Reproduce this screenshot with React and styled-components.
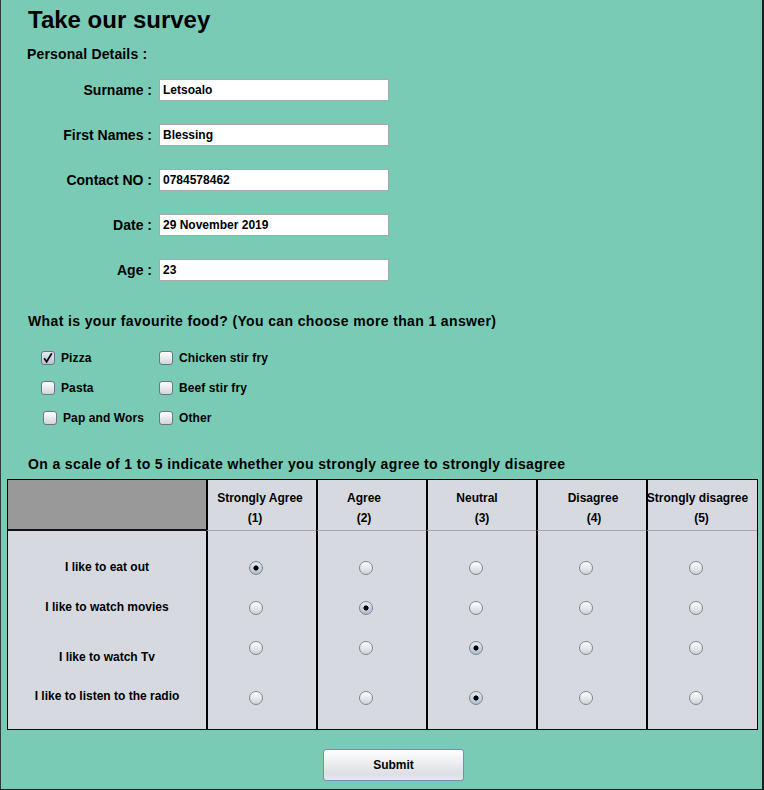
import React from 'react';
import styled, { createGlobalStyle } from 'styled-components';

const GlobalStyle = createGlobalStyle`
  html, body {
    margin: 0;
    padding: 0;
    background: #7acbb5;
  }
  * {
    box-sizing: border-box;
  }
`;

const fields = [
  { label: 'Surname :', value: 'Letsoalo' },
  { label: 'First Names :', value: 'Blessing' },
  { label: 'Contact NO :', value: '0784578462' },
  { label: 'Date :', value: '29 November 2019' },
  { label: 'Age :', value: '23' },
];

const foods = [
  { label: 'Pizza', checked: true },
  { label: 'Chicken stir fry' },
  { label: 'Pasta' },
  { label: 'Beef stir fry' },
  { label: 'Pap and Wors', nudge: 2 },
  { label: 'Other' },
];

const scale = [
  { title: 'Strongly Agree', num: '(1)', shift: [-2, -7] },
  { title: 'Agree', num: '(2)', shift: [-8, -8] },
  { title: 'Neutral', num: '(3)', shift: [-5, 0] },
  { title: 'Disagree', num: '(4)', shift: [1, 2] },
  { title: 'Strongly disagree', num: '(5)', shift: [-5, -1] },
];

const statements = [
  { label: 'I like to eat out', pick: 0, height: 56, labelPad: 29, radioPad: 30 },
  { label: 'I like to watch movies', pick: 1, height: 40, labelPad: 13, radioPad: 14 },
  { label: 'I like to watch Tv', pick: 2, height: 50, labelPad: 23, radioPad: 14 },
  { label: 'I like to listen to the radio', pick: 2, height: 52, labelPad: 12, radioPad: 14 },
];

export default function App() {
  return (
    <>
      <GlobalStyle />
      <Window>
        <Title>Take our survey</Title>
        <SectionLabel>Personal Details :</SectionLabel>

        <Form>
          {fields.map((f) => (
            <FieldRow key={f.label}>
              <FieldLabel>{f.label}</FieldLabel>
              <TextBox readOnly defaultValue={f.value} />
            </FieldRow>
          ))}
        </Form>

        <Question $top={32}>
          What is your favourite food? (You can choose more than 1 answer)
        </Question>

        <FoodGrid>
          {foods.map((f) => (
            <FoodItem key={f.label} $nudge={f.nudge || 0}>
              <CheckBox $checked={f.checked}>
                {f.checked && (
                  <svg width="12" height="12" viewBox="0 0 12 12">
                    <path
                      d="M2.2 6.2 L4.6 9.8 L9.8 1.2"
                      fill="none"
                      stroke="#111"
                      strokeWidth="1.8"
                    />
                  </svg>
                )}
              </CheckBox>
              <FoodLabel>{f.label}</FoodLabel>
            </FoodItem>
          ))}
        </FoodGrid>

        <Question $top={23}>
          On a scale of 1 to 5 indicate whether you strongly agree to strongly disagree
        </Question>

        <Table>
          <CornerCell />
          {scale.map((s) => (
            <HeadCell key={s.num}>
              <HeadLine $shift={s.shift[0]}>{s.title}</HeadLine>
              <HeadLine $shift={s.shift[1]}>{s.num}</HeadLine>
            </HeadCell>
          ))}

          {statements.map((row) => (
            <React.Fragment key={row.label}>
              <StatementCell $h={row.height} $pad={row.labelPad}>
                {row.label}
              </StatementCell>
              {scale.map((s, i) => (
                <RadioCell key={s.num} $h={row.height} $pad={row.radioPad}>
                  <Radio $on={row.pick === i} />
                </RadioCell>
              ))}
            </React.Fragment>
          ))}
        </Table>

        <ButtonRow>
          <SubmitButton>Submit</SubmitButton>
        </ButtonRow>
      </Window>
    </>
  );
}

const Window = styled.div`
  min-height: 790px;
  width: 764px;
  padding: 6px 0 0 6px;
  border-left: 1px solid #2c3b3b;
  border-right: 2px solid #142222;
  border-bottom: 1px solid #142222;
  font-family: 'Liberation Sans', Arial, sans-serif;
  font-weight: bold;
  color: #000;
`;

const Title = styled.h1`
  margin: 0 0 0 21px;
  font-size: 24px;
  line-height: 28px;
  font-weight: bold;
`;

const SectionLabel = styled.div`
  margin: 12px 0 0 20px;
  font-size: 14px;
  line-height: 16px;
  letter-spacing: 0.15px;
`;

const Form = styled.div`
  margin-top: 17px;
  display: flex;
  flex-direction: column;
  gap: 23px;
`;

const FieldRow = styled.div`
  display: flex;
  align-items: center;
  height: 22px;
`;

const FieldLabel = styled.label`
  width: 145px;
  text-align: right;
  font-size: 14px;
`;

const TextBox = styled.input`
  margin-left: 7px;
  width: 230px;
  height: 22px;
  border: 1px solid #a6a9ae;
  background: #fff;
  padding: 0 0 0 3px;
  font-family: 'Liberation Sans', Arial, sans-serif;
  font-weight: bold;
  font-size: 12px;
  color: #000;
  outline: none;
`;

const Question = styled.div`
  margin: ${(p) => p.$top}px 0 0 21px;
  font-size: 14px;
  line-height: 16px;
  letter-spacing: 0.37px;
`;

const FoodGrid = styled.div`
  margin: 14px 0 0 34px;
  display: grid;
  grid-template-columns: 118px auto;
  grid-auto-rows: 30px;
`;

const FoodItem = styled.div`
  display: flex;
  align-items: center;
  gap: 6px;
  padding-left: ${(p) => p.$nudge}px;
`;

const CheckBox = styled.span`
  width: 14px;
  height: 14px;
  border: 1px solid #6e7480;
  border-radius: 3px;
  display: flex;
  align-items: center;
  justify-content: center;
  background: ${(p) =>
    p.$checked
      ? 'linear-gradient(#e4eaf3, #b9c6d8)'
      : 'linear-gradient(#ffffff, #d1d5db)'};
`;

const FoodLabel = styled.span`
  font-size: 12px;
  letter-spacing: 0.1px;
`;

const Table = styled.div`
  margin-top: 7px;
  width: 751px;
  border: 1px solid #000;
  display: grid;
  grid-template-columns: 198px repeat(4, 110px) 111px;
  background: #d6d9df;
  font-size: 12px;
`;

const CornerCell = styled.div`
  height: 51px;
  background: #999999;
  border-bottom: 2px solid #111;
`;

const HeadCell = styled.div`
  height: 51px;
  border-left: 2px solid #000;
  border-bottom: 1px solid #a4a6aa;
  padding-top: 8px;
  display: flex;
  flex-direction: column;
`;

const HeadLine = styled.div`
  line-height: 20px;
  text-align: center;
  white-space: nowrap;
  transform: translateX(${(p) => p.$shift}px);
`;

const StatementCell = styled.div`
  height: ${(p) => p.$h}px;
  padding-top: ${(p) => p.$pad - 1}px;
  line-height: 16px;
  text-align: center;
`;

const RadioCell = styled.div`
  height: ${(p) => p.$h}px;
  border-left: 2px solid #000;
  padding: ${(p) => p.$pad}px 0 0 41px;
`;

const Radio = styled.span`
  display: block;
  width: 14px;
  height: 14px;
  border-radius: 50%;
  border: 1px solid #81858c;
  background: ${(p) =>
    p.$on
      ? 'radial-gradient(circle, #000 0 2.3px, transparent 2.8px), linear-gradient(#e6ecf4, #aebdd0)'
      : 'linear-gradient(#ffffff, #cfd2d8)'};
`;

const ButtonRow = styled.div`
  margin-top: 19px;
  padding-left: 316px;
`;

const SubmitButton = styled.button`
  width: 141px;
  height: 32px;
  border: 1px solid #7c8cb0;
  border-radius: 3px;
  background: linear-gradient(#ffffff, #dcdfe4 80%, #e7e9ec);
  font-family: 'Liberation Sans', Arial, sans-serif;
  font-weight: bold;
  font-size: 12px;
  color: #000;
  padding: 0;
`;
